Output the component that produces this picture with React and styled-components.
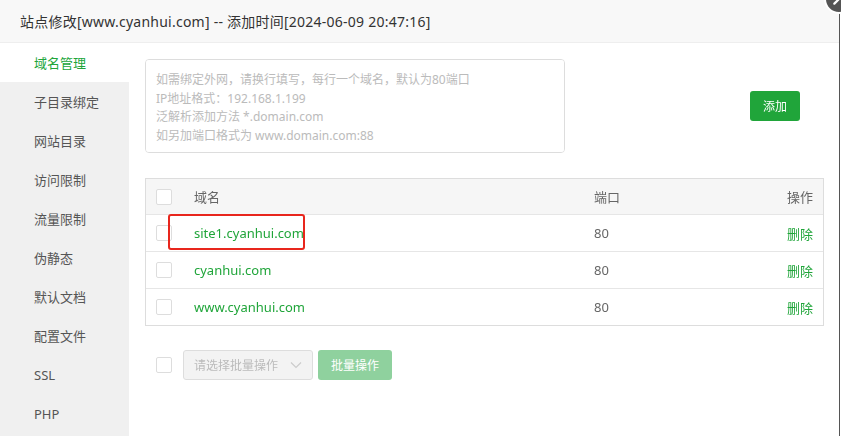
import styled, { createGlobalStyle } from "styled-components";

const GlobalStyle = createGlobalStyle`
    html, body {
        margin: 0;
        padding: 0;
        background: #fff;
    }
    * {
        box-sizing: border-box;
    }
    body {
        font-family: "Noto Sans", "Noto Sans CJK SC", sans-serif;
        color: #333;
    }
`

const menu = ['域名管理', '子目录绑定', '网站目录', '访问限制', '流量限制', '伪静态', '默认文档', '配置文件', 'SSL', 'PHP']

const domains = [
    { name: 'site1.cyanhui.com', port: 80, marked: true },
    { name: 'cyanhui.com', port: 80 },
    { name: 'www.cyanhui.com', port: 80 },
]

function App() {
    return (
        <>
            <GlobalStyle />
            <Dialog>
                <Header>站点修改[www.cyanhui.com] -- 添加时间[2024-06-09 20:47:16]</Header>
                <Body>
                    <Sidebar>
                        {menu.map((item, i) => (
                            <MenuItem key={item} active={i === 0}>{item}</MenuItem>
                        ))}
                    </Sidebar>

                    <Content>
                        <AddRow>
                            <DomainInput
                                placeholder={'如需绑定外网，请换行填写，每行一个域名，默认为80端口\nIP地址格式：192.168.1.199\n泛解析添加方法 *.domain.com\n如另加端口格式为 www.domain.com:88'}
                            />
                            <AddButton>添加</AddButton>
                        </AddRow>

                        <Table>
                            <HeadRow>
                                <Check />
                                <NameCell>域名</NameCell>
                                <PortCell>端口</PortCell>
                                <ActionCell>操作</ActionCell>
                            </HeadRow>
                            {domains.map(d => (
                                <Row key={d.name}>
                                    <Check />
                                    <NameCell>
                                        <DomainLink>{d.name}</DomainLink>
                                        {d.marked && <Marker />}
                                    </NameCell>
                                    <PortCell>{d.port}</PortCell>
                                    <ActionCell><DeleteLink>删除</DeleteLink></ActionCell>
                                </Row>
                            ))}
                        </Table>

                        <BatchBar>
                            <Check />
                            <BatchSelect>
                                <span>请选择批量操作</span>
                                <svg width="12" height="8" viewBox="0 0 12 8">
                                    <path d="M1 1.5 L6 6.5 L11 1.5" fill="none" stroke="#ccc" strokeWidth="1.2" />
                                </svg>
                            </BatchSelect>
                            <BatchButton>批量操作</BatchButton>
                        </BatchBar>
                    </Content>
                </Body>
            </Dialog>
            <CloseButton>
                <svg width="28" height="28" viewBox="0 0 28 28">
                    <path d="M9 19 L19 9" stroke="#fff" strokeWidth="2.4" strokeLinecap="round" />
                </svg>
            </CloseButton>
        </>
    )
}

export default App

const Dialog = styled.div`
    width: 840px;
    height: 436px;
    border-right: 1px solid #555;
    display: flex;
    flex-direction: column;
    overflow: hidden;
`

const Header = styled.div`
    height: 43px;
    flex-shrink: 0;
    padding: 0 20px;
    display: flex;
    align-items: center;
    background-color: #f8f8f8;
    border-bottom: 1px solid #eee;
    font-size: 14px;
    letter-spacing: 0.24px;
    color: #333;
`

const Body = styled.div`
    flex: 1;
    display: flex;
    min-height: 0;
`

const Sidebar = styled.div`
    width: 129px;
    flex-shrink: 0;
    background-color: #f0f0f0;
    display: flex;
    flex-direction: column;
`

const MenuItem = styled.div`
    height: 39px;
    flex-shrink: 0;
    padding-left: 34px;
    display: flex;
    align-items: center;
    font-size: 13px;
    color: ${props => props.active ? '#20a53a' : '#555'};
    background-color: ${props => props.active ? '#fff' : 'transparent'};
`

const Content = styled.div`
    flex: 1;
    padding: 16px 16px 0 16px;
    display: flex;
    flex-direction: column;
`

const AddRow = styled.div`
    display: flex;
    align-items: center;
    height: 94px;
`

const DomainInput = styled.textarea`
    width: 420px;
    height: 94px;
    resize: none;
    border: 1px solid #ddd;
    border-radius: 4px;
    padding: 11px 10px;
    font-family: "Noto Sans", "Noto Sans CJK SC", sans-serif;
    font-size: 12px;
    line-height: 18.5px;
    outline: 0;

    &::placeholder {
        color: #bbb;
    }
`

const AddButton = styled.button`
    margin-left: 185px;
    width: 50px;
    height: 30px;
    border: 0;
    border-radius: 3px;
    background-color: #20a53a;
    color: #fff;
    font-family: "Noto Sans", "Noto Sans CJK SC", sans-serif;
    font-size: 12px;
`

const Table = styled.div`
    margin-top: 25px;
    width: 679px;
    border: 1px solid #ddd;
    display: flex;
    flex-direction: column;
`

const Row = styled.div`
    height: 37px;
    display: grid;
    grid-template-columns: 38px 400px 1fr 80px;
    align-items: center;
    padding-left: 10px;
    padding-right: 10px;
    font-size: 13px;
    border-top: 1px solid #e6e6e6;
    color: #666;
`

const HeadRow = styled(Row)`
    height: 35px;
    border-top: 0;
    background-color: #f6f6f6;
    color: #666;
`

const Check = styled.span`
    display: block;
    width: 16px;
    height: 16px;
    border: 1px solid #ddd;
    border-radius: 2px;
    background: #fff;
`

const NameCell = styled.div`
    position: relative;
`

const PortCell = styled.div``

const ActionCell = styled.div`
    text-align: right;
`

const DomainLink = styled.span`
    color: #20a53a;
`

const DeleteLink = styled.span`
    color: #20a53a;
`

const Marker = styled.span`
    position: absolute;
    left: -26px;
    top: -10px;
    width: 137px;
    height: 36px;
    border: 2px solid #e8261d;
    border-radius: 3px;
`

const BatchBar = styled.div`
    margin-top: 24px;
    display: flex;
    align-items: center;
    padding-left: 11px;
    height: 30px;
`

const BatchSelect = styled.div`
    margin-left: 11px;
    width: 130px;
    height: 30px;
    border: 1px solid #ddd;
    border-radius: 3px;
    background-color: #f3f3f3;
    display: flex;
    align-items: center;
    justify-content: space-between;
    padding: 0 10px 0 10px;
    font-size: 12px;
    color: #bbb;
`

const BatchButton = styled.button`
    margin-left: 5px;
    width: 74px;
    height: 30px;
    border: 0;
    border-radius: 3px;
    background-color: #8fd19e;
    color: #fff;
    font-family: "Noto Sans", "Noto Sans CJK SC", sans-serif;
    font-size: 12px;
`

const CloseButton = styled.div`
    position: absolute;
    top: -16px;
    left: 824px;
    width: 30px;
    height: 30px;
    border-radius: 50%;
    background-color: #555;
    border: 2px solid #fff;
    display: flex;
    align-items: center;
    justify-content: center;
`
